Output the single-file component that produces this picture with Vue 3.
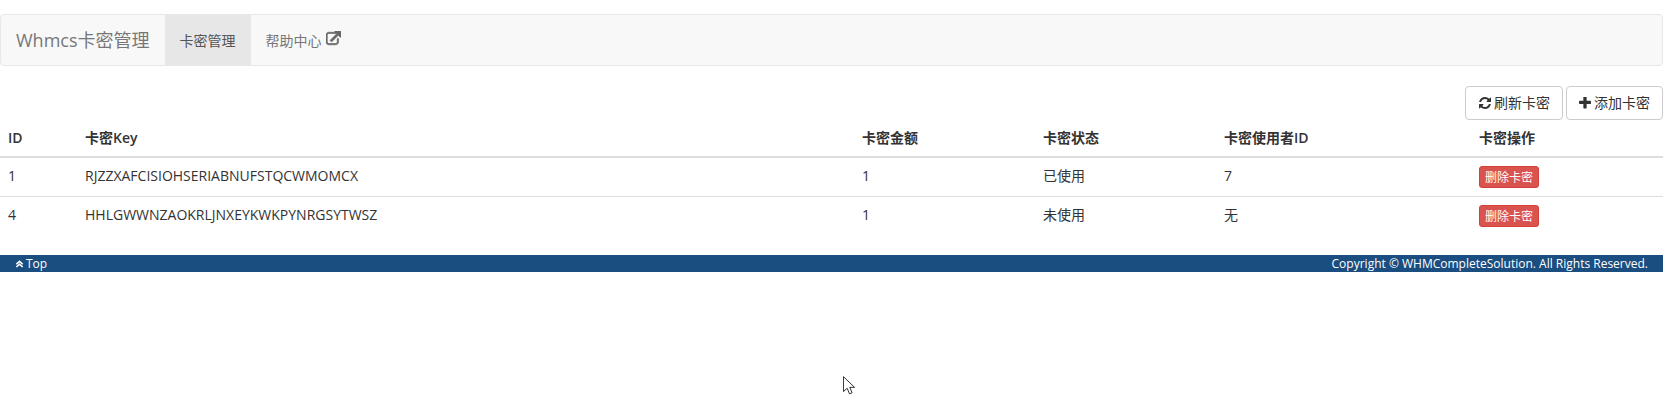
<script setup>
const columns = [
  { key: 'id', label: 'ID', width: '77px' },
  { key: 'key', label: '卡密Key', width: '777px' },
  { key: 'amount', label: '卡密金额', width: '181px' },
  { key: 'status', label: '卡密状态', width: '181px' },
  { key: 'user', label: '卡密使用者ID', width: '255px' },
  { key: 'action', label: '卡密操作', width: '192px' }
]

const items = [
  { id: 1, key: 'RJZZXAFCISIOHSERIABNUFSTQCWMOMCX', amount: 1, status: '已使用', user: '7' },
  { id: 4, key: 'HHLGWWNZAOKRLJNXEYKWKPYNRGSYTWSZ', amount: 1, status: '未使用', user: '无' }
]
</script>

<template>
  <div class="page">
    <nav class="navbar">
      <a class="brand">Whmcs卡密管理</a>
      <a class="nav-item active">卡密管理</a>
      <a class="nav-item">
        帮助中心
        <svg class="icon-link" viewBox="0 0 1536 1536">
          <path d="M1280 800v320q0 119-84.500 203.500T992 1408H288q-119 0-203.500-84.500T0 1120V416q0-119 84.500-203.500T288 128h704q14 0 23 9t9 23v64q0 14-9 23t-23 9H288q-66 0-113 47t-47 113v704q0 66 47 113t113 47h704q66 0 113-47t47-113V800q0-14 9-23t23-9h64q14 0 23 9t9 23zM1536 64v512q0 26-19 45t-45 19-45-19l-176-176-652 652q-10 10-23 10t-23-10L439 983q-10-10-10-23t10-23l652-652-176-176q-19-19-19-45t19-45 45-19h512q26 0 45 19t19 45z" />
        </svg>
      </a>
    </nav>

    <div class="toolbar">
      <button class="btn btn-refresh">
        <svg class="icon" viewBox="128 128 1536 1536">
          <path d="M1639 1056q0 5-1 7-64 268-268 434.500t-478 166.500q-146 0-282.500-55t-243.500-157l-129 129q-19 19-45 19t-45-19-19-45v-448q0-26 19-45t45-19h448q26 0 45 19t19 45-19 45l-137 137q71 66 161 102t187 36q134 0 250-65t186-179q11-17 53-117 8-23 30-23h192q13 0 22.500 9.500t9.500 22.500zm25-800v448q0 26-19 45t-45 19h-448q-26 0-45-19t-19-45 19-45l138-138q-148-137-349-137-134 0-250 65t-186 179q-11 17-53 117-8 23-30 23h-199q-13 0-22.500-9.500t-9.500-22.500v-7q65-268 270-434.500t480-166.500q146 0 284 55.500t245 156.500l130-129q19-19 45-19t45 19 19 45z" />
        </svg>
        刷新卡密
      </button>
      <button class="btn">
        <svg class="icon" viewBox="192 192 1408 1408">
          <path d="M1600 736v192q0 40-28 68t-68 28h-416v416q0 40-28 68t-68 28h-192q-40 0-68-28t-28-68v-416h-416q-40 0-68-28t-28-68v-192q0-40 28-68t68-28h416v-416q0-40 28-68t68-28h192q40 0 68 28t28 68v416h416q40 0 68 28t28 68z" />
        </svg>
        添加卡密
      </button>
    </div>

    <table class="table">
      <thead>
        <tr>
          <th v-for="column in columns" :key="column.key" :style="{ width: column.width }">
            {{ column.label }}
          </th>
        </tr>
      </thead>
      <tbody>
        <tr v-for="item in items" :key="item.id">
          <td>{{ item.id }}</td>
          <td>{{ item.key }}</td>
          <td>{{ item.amount }}</td>
          <td>{{ item.status }}</td>
          <td>{{ item.user }}</td>
          <td><button class="btn-danger">删除卡密</button></td>
        </tr>
      </tbody>
    </table>

    <footer class="footer">
      <a class="top">
        <svg class="icon-top" viewBox="0 0 12 12">
          <path d="M1 6.200 6 1.800l5 4.400-1.500 1.400L6 4.600 2.500 7.600zM1 10 6 5.600l5 4.400-1.500 1.400L6 8.400l-3.500 3z" />
        </svg>
        Top
      </a>
      <span>Copyright © WHMCompleteSolution. All Rights Reserved.</span>
    </footer>

    <svg class="cursor" viewBox="0 0 14 20">
      <path d="M0.500 0.500v16l4-3.500 2.500 6 2.800-1.200-2.500-5.800h5.200z" fill="#fff" stroke="#222" stroke-width="1" />
    </svg>
  </div>
</template>

<style scoped>
.page {
  position: relative;
  width: 1663px;
  height: 406px;
  padding-top: 14px;
  box-sizing: border-box;
  font-family: "Open Sans", "Noto Sans CJK SC", sans-serif;
  font-size: 14px;
  line-height: 20px;
  color: #333;
}

.navbar {
  display: flex;
  height: 52px;
  box-sizing: border-box;
  background: #f8f8f8;
  border: 1px solid #e7e7e7;
  border-radius: 4px;
}

.brand {
  padding: 15px;
  font-size: 18px;
  color: #777;
}

.nav-item {
  display: flex;
  align-items: center;
  gap: 4px;
  padding: 1px 15px 0;
  color: #777;
}

.nav-item.active {
  background: #e7e7e7;
  color: #555;
}

.icon-link {
  width: 15px;
  height: 15px;
  fill: #666;
  stroke: #666;
  stroke-width: 70;
  margin-top: -4px;
}

.toolbar {
  display: flex;
  justify-content: flex-end;
  gap: 3px;
  margin-top: 20px;
}

.btn {
  display: flex;
  align-items: center;
  gap: 3px;
  height: 34px;
  padding: 0 12px;
  background: #fff;
  border: 1px solid #ccc;
  border-radius: 4px;
  font: inherit;
  color: #333;
}

.btn-refresh {
  padding-left: 13px;
}

.icon {
  width: 12px;
  height: 12px;
  fill: #333;
}

.table {
  width: 100%;
  table-layout: fixed;
  border-collapse: collapse;
}

.table th,
.table td {
  padding: 8px;
  text-align: left;
  box-sizing: border-box;
}

.table th {
  font-weight: 600;
  border-bottom: 2px solid #ddd;
}

.table td {
  height: 36px;
  padding-top: 7px;
  padding-bottom: 9px;
  border-top: 1px solid #ddd;
}

.table tbody tr:first-child td {
  border-top: none;
}

.btn-danger {
  display: block;
  height: 22px;
  margin-top: 1px;
  margin-bottom: -1px;
  padding: 0 5px;
  background: #d9534f;
  border: 1px solid #d43f3a;
  border-radius: 3px;
  font-family: inherit;
  font-size: 12px;
  color: #fff;
}

.footer {
  display: flex;
  justify-content: space-between;
  align-items: center;
  height: 17px;
  margin-top: 20px;
  padding: 0 15px;
  background: #1a4d80;
  font-size: 12px;
  color: #fff;
}

.top {
  display: flex;
  align-items: center;
  gap: 2px;
}

.icon-top {
  width: 9px;
  height: 9px;
  fill: #fff;
}

.cursor {
  position: absolute;
  left: 843px;
  top: 376px;
  width: 13px;
  height: 19px;
}
</style>

<style>
html,
body {
  background: #fff;
  overflow: hidden;
}
</style>
